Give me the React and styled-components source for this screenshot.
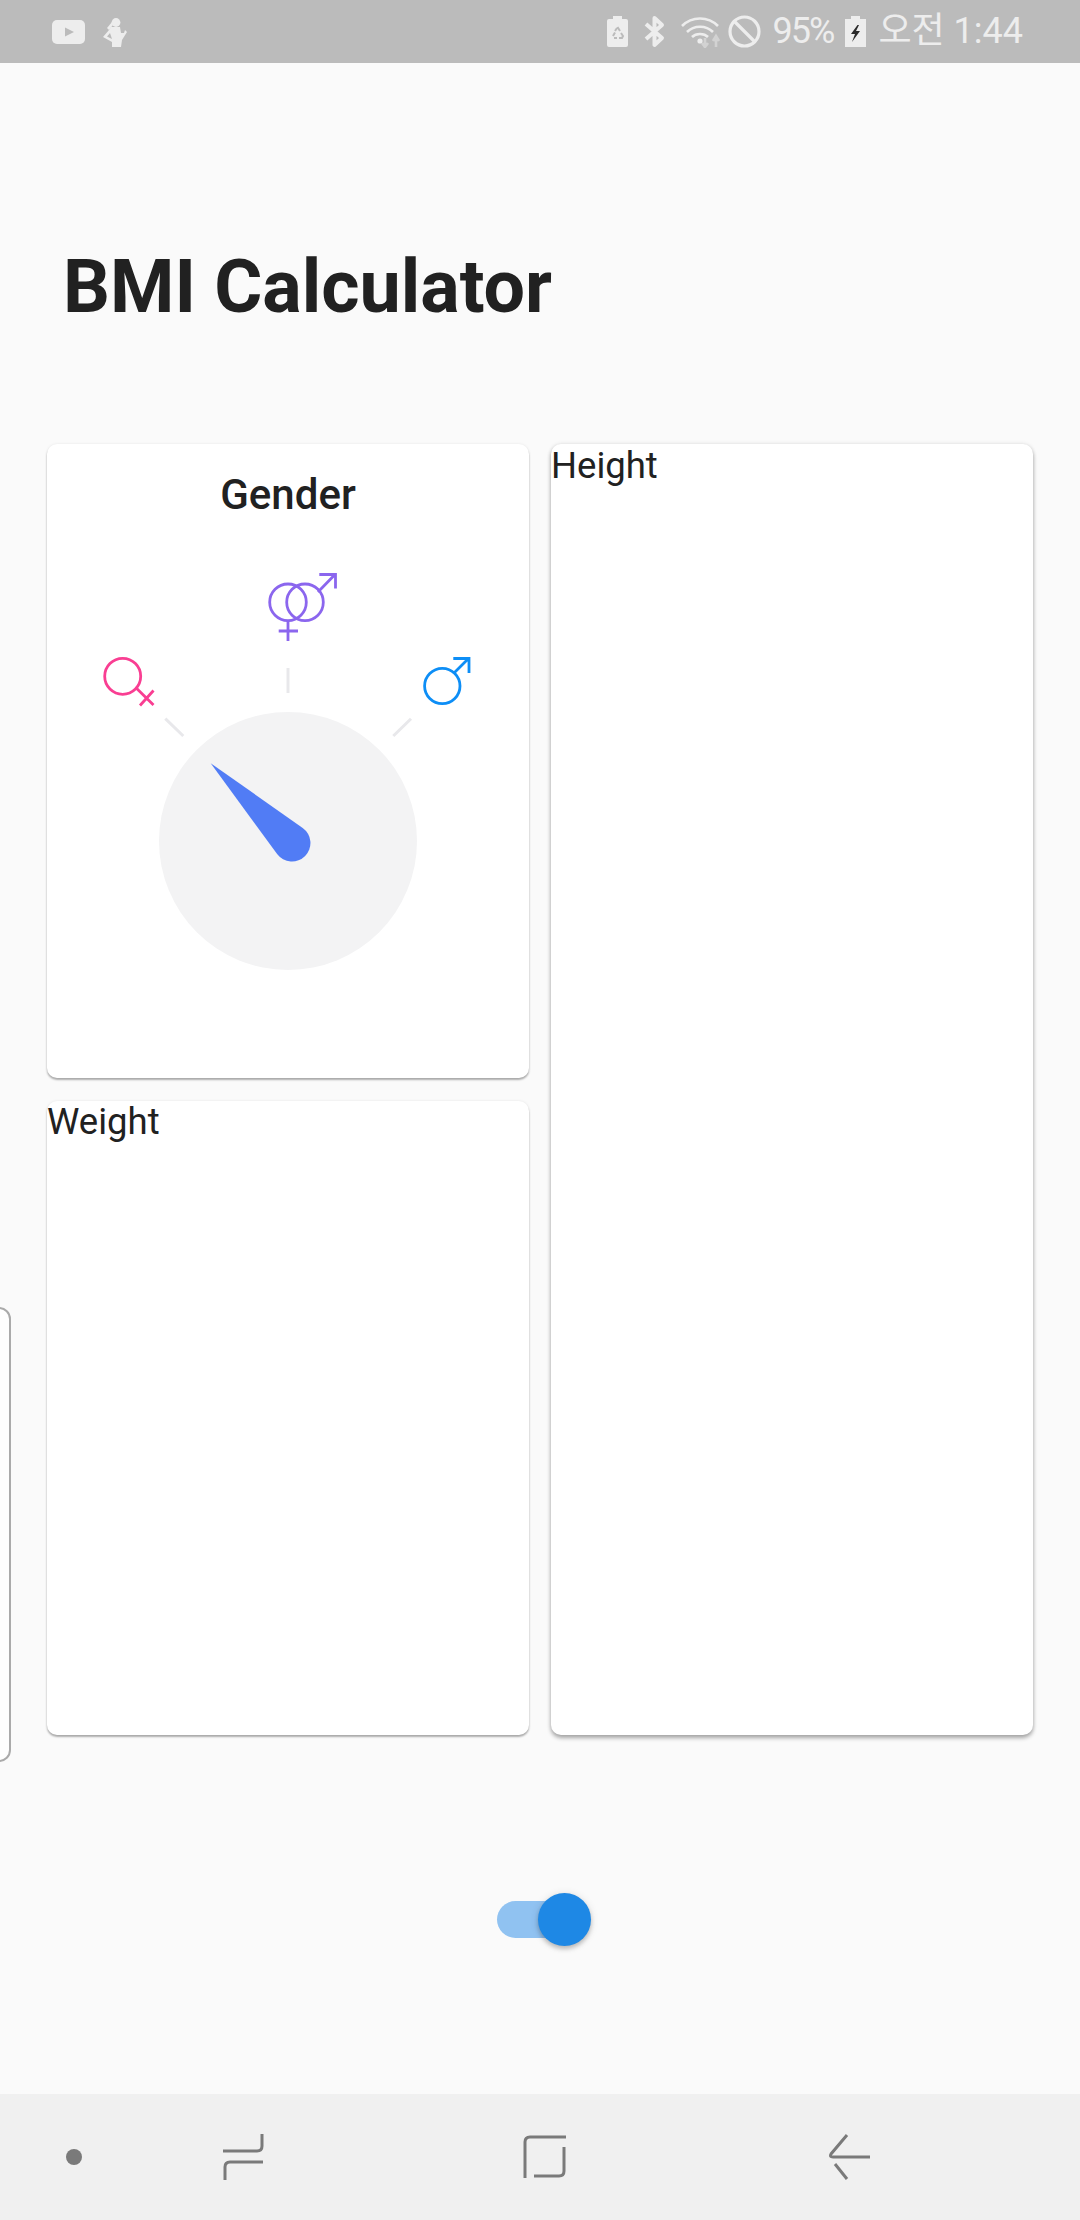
import React from "react";
import styled, { createGlobalStyle } from "styled-components";

const GlobalStyle = createGlobalStyle`
    html, body {
        margin: 0;
        padding: 0;
        background: #fafafa;
    }
    body {
        font-family: Roboto, "Noto Sans CJK KR", sans-serif;
        color: #212121;
    }
`;

const Page = styled.div`
    position: relative;
    width: 1080px;
    height: 2220px;
    display: flex;
    flex-direction: column;
    overflow: hidden;
    background: #fafafa;
`;

const StatusBar = styled.div`
    height: 63px;
    flex: none;
    display: flex;
    align-items: center;
    justify-content: space-between;
    padding: 0 57px 0 52px;
    background: #bbbbbb;
    color: #ededed;
`;

const StatusGroup = styled.div`
    display: flex;
    align-items: center;
    gap: ${props => props.$gap}px;
`;

const StatusText = styled.span`
    font-size: ${props => props.$size}px;
    font-weight: 400;
    line-height: 63px;
    letter-spacing: ${props => props.$spacing}px;
    white-space: nowrap;
`;

const Main = styled.main`
    flex: 1;
    display: flex;
    flex-direction: column;
`;

const Title = styled.h1`
    margin: 184px 0 117px 63px;
    font-size: 73.6px;
    line-height: 80px;
    font-weight: 700;
    color: #212121;
`;

const CardGrid = styled.div`
    display: grid;
    grid-template-columns: 482px 482px;
    grid-template-rows: 634px 634px;
    gap: 23px 22px;
    padding-left: 47px;
`;

const Card = styled.section`
    grid-column: ${props => props.$tall ? "2" : "1"};
    grid-row: ${props => props.$tall ? "1 / span 2" : "auto"};
    padding-top: ${props => props.$tall ? "1px" : "0"};
    background: #ffffff;
    border-radius: 10px;
    box-shadow: ${props => props.$tall
        ? "0 3px 4px rgba(0, 0, 0, 0.32), 0 0 4px rgba(0, 0, 0, 0.1)"
        : "0 2px 2px rgba(0, 0, 0, 0.3), 0 0 3px rgba(0, 0, 0, 0.08)"};
    font-size: 36.5px;
    line-height: 42px;
    color: #212121;
`;

const CardTitle = styled.h2`
    margin: 0;
    padding: 29px 0 3px;
    font-size: 42px;
    line-height: 44px;
    font-weight: 500;
    text-align: center;
`;

const Dial = styled.svg`
    display: block;
`;

const PeekCard = styled.div`
    position: absolute;
    left: -30px;
    top: 1307px;
    width: 37px;
    height: 451px;
    border: 2px solid #aaaaaa;
    border-radius: 12px;
    background: #fefefe;
`;

const SwitchRow = styled.div`
    display: flex;
    justify-content: center;
    padding: 166px 0 0 3px;
`;

const SwitchTrack = styled.div`
    position: relative;
    width: 89px;
    height: 37px;
    border-radius: 19px;
    background: #90c2f1;
`;

const SwitchThumb = styled.div`
    position: absolute;
    right: -5px;
    top: -8px;
    width: 53px;
    height: 53px;
    border-radius: 50%;
    background: #1e88e5;
    box-shadow: 0 3px 4px rgba(0, 0, 0, 0.2), 0 1px 8px rgba(0, 0, 0, 0.12);
`;

const NavBar = styled.nav`
    height: 126px;
    flex: none;
    display: grid;
    grid-template-columns: 148px 190px 414px 194px;
    justify-items: center;
    align-items: center;
    background: #f0f0f0;
`;

const NavDot = styled.div`
    width: 16px;
    height: 16px;
    border-radius: 50%;
    background: #7a7a7a;
`;

const NavIcon = styled.svg`
    display: block;
    fill: none;
    stroke: #7a7a7a;
    stroke-width: 3;
`;

const YoutubeIcon = () => (
    <svg width="33" height="24" viewBox="0 0 33 24">
        <rect width="33" height="24" rx="5" fill="#ededed" />
        <path d="M13 7.5 L22 12 L13 16.5 Z" fill="#bbbbbb" />
    </svg>
);

const RunnerIcon = () => (
    <svg width="24" height="30" viewBox="0 0 24 30" style={{ marginTop: 2 }}>
        <circle cx="13" cy="4.5" r="4.4" fill="#ededed" />
        <path d="M9 4 L4 10 L6 12 L10 7 Z" fill="#ededed" />
        <path d="M8 9 H17 L18 15 L21 15 L22 12 L24 14 L19 22 L18 29 H9 L9 24 L0 19 L6 12 Z M7 15 L4 18.5 L9 21 Z" fill="#ededed" fillRule="evenodd" />
    </svg>
);

const RecycleBatteryIcon = () => (
    <svg width="21" height="31" viewBox="0 0 21 31">
        <path d="M6 0 H15 V3 H19 Q21 3 21 5 V29 Q21 31 19 31 H2 Q0 31 0 29 V5 Q0 3 2 3 H6 Z" fill="#ededed" />
        <path d="M10.5 11 L13 15 M8 15 L10 12 M6 20 L8 16.5 M7 22 H10 M12 22 H15 L16 20 L14 17" fill="none" stroke="#bbbbbb" strokeWidth="2" />
    </svg>
);

const BluetoothIcon = () => (
    <svg width="21" height="33" viewBox="0 0 21 33">
        <path d="M2 9 L18 23 L10.5 30 V3 L18 10 L2 24" fill="none" stroke="#ededed" strokeWidth="4" strokeLinejoin="round" />
    </svg>
);

const WifiIcon = () => (
    <svg width="40" height="32" viewBox="0 0 40 32">
        <path d="M1 10 C11 0 27 0 37 10 M6 16 C13 9 25 9 32 16 M11 21 C15 17 23 17 27 21" fill="none" stroke="#ededed" strokeWidth="2.6" />
        <circle cx="19" cy="25" r="2.6" fill="#ededed" />
        <path d="M24 22 V29 M21 27 L24 31 L27 27 M35 31 V23 M32 25 L35 20 L38 25" fill="none" stroke="#d2d2d2" strokeWidth="2.6" />
    </svg>
);

const BlockedIcon = () => (
    <svg width="33" height="33" viewBox="0 0 33 33">
        <circle cx="16.5" cy="16.5" r="14.5" fill="none" stroke="#ededed" strokeWidth="3.2" />
        <path d="M6.5 6.5 L26.5 26.5" stroke="#ededed" strokeWidth="3.2" />
    </svg>
);

const ChargingIcon = () => (
    <svg width="21" height="31" viewBox="0 0 21 31">
        <path d="M6 0 H15 V3 H21 V31 H0 V3 H6 Z" fill="#ededed" />
        <path d="M12.5 9 L6 18 H10 L7 26 L15 15 H11 L14 9 Z" fill="#2a2a2a" />
    </svg>
);

const GenderDial = () => (
    <Dial width="482" height="560" viewBox="47 520 482 560" fill="none">
        <g stroke="#e8e8eb" strokeWidth="3">
            <path d="M288 668 V693" />
            <path d="M165.3 718.7 L183.3 736" />
            <path d="M411 718.7 L393.3 736" />
        </g>
        <g stroke="#f93e92" strokeWidth="2.8">
            <circle cx="122.7" cy="676.3" r="18" />
            <path d="M136.7 688.5 L153.5 705 M153.5 690.5 L140 705.5" />
        </g>
        <g stroke="#8b66ee" strokeWidth="2.8">
            <circle cx="288" cy="602.3" r="18.3" />
            <circle cx="305" cy="602.3" r="18.3" />
            <path d="M288 621 V641 M278.7 631 H298" />
            <path d="M318 592 L335 574.5 M319.3 574.5 H335.5 V588.5" />
        </g>
        <g stroke="#0d8ef6" strokeWidth="2.8">
            <circle cx="442.3" cy="686" r="17.7" />
            <path d="M454 673 L468.5 658.5 M453.3 658.5 H469 V673" />
        </g>
        <circle cx="288" cy="841" r="129" fill="#f3f3f4" />
        <path d="M210.7 763.3 L302.7 827.9 A18.5 18.5 0 1 1 277.1 854 Z" fill="#517cf5" />
    </Dial>
);

const App = () => {
    return (
        <Page>
            <GlobalStyle />
            <StatusBar>
                <StatusGroup $gap={18}>
                    <YoutubeIcon />
                    <RunnerIcon />
                </StatusGroup>
                <StatusGroup $gap={7}>
                    <StatusGroup $gap={16}>
                        <RecycleBatteryIcon />
                        <BluetoothIcon />
                        <WifiIcon />
                    </StatusGroup>
                    <StatusGroup $gap={12}>
                        <BlockedIcon />
                        <StatusText $size={36} $spacing={-2}>95%</StatusText>
                        <ChargingIcon />
                        <StatusText $size={36} $spacing={0}>오전 1:44</StatusText>
                    </StatusGroup>
                </StatusGroup>
            </StatusBar>
            <Main>
                <Title>BMI Calculator</Title>
                <CardGrid>
                    <Card>
                        <CardTitle>Gender</CardTitle>
                        <GenderDial />
                    </Card>
                    <Card $tall>Height</Card>
                    <Card>Weight</Card>
                </CardGrid>
                <SwitchRow>
                    <SwitchTrack>
                        <SwitchThumb />
                    </SwitchTrack>
                </SwitchRow>
            </Main>
            <PeekCard />
            <NavBar>
                <NavDot />
                <NavIcon width="44" height="50" viewBox="0 0 44 50">
                    <path d="M41 2 V14 Q41 19 36 19 H2" />
                    <path d="M42 30 H9 Q4 30 4 35 V48" />
                </NavIcon>
                <NavIcon width="44" height="46" viewBox="0 0 44 46">
                    <path d="M43 3 H7 Q2 3 2 8 V44" />
                    <path d="M41 13 V37 Q41 42 36 42 H11" />
                </NavIcon>
                <NavIcon width="44" height="48" viewBox="0 0 44 48">
                    <path d="M20 2 L4 21 Q2 24 6 24 H43" />
                    <path d="M8 31 L20 46" />
                </NavIcon>
            </NavBar>
        </Page>
    );
};

export default App;
